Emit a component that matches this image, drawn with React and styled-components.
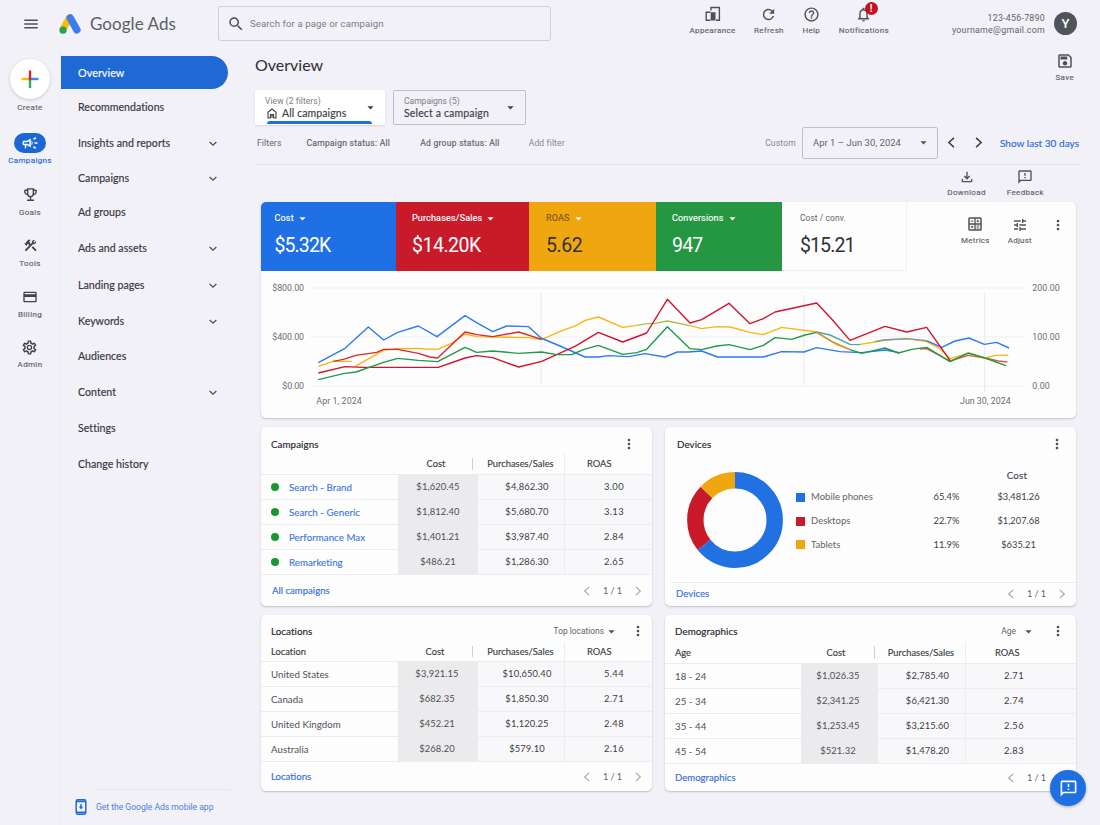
import React from "react";
import styled, { createGlobalStyle, css } from "styled-components";
import {
  MdMenu, MdSearch, MdRefresh, MdHelpOutline, MdNotificationsNone, MdOutlineSave,
  MdOutlineFileDownload, MdOutlineFeedback, MdOutlineCampaign, MdOutlineEmojiEvents,
  MdConstruction, MdCreditCard, MdOutlineSettings, MdMoreVert, MdArrowDropDown, MdTune,
} from "react-icons/md";

const GlobalStyle = createGlobalStyle`
  *, *::before, *::after { box-sizing: border-box; }
  body {
    margin: 0;
    background: #f2f1f7;
    color: #3c4043;
    font-family: Lato, "Open Sans", sans-serif;
    font-size: 10px;
    overflow: hidden;
  }
  svg { display: block; flex: none; }
`;

const BLUE = "#1f6fe5";
const RED = "#c81a29";
const AMBER = "#f0a60e";
const GREEN = "#259642";

const Page = styled.div`
  width: 1100px;
  height: 825px;
  display: flex;
  flex-direction: column;
`;

const Text = styled.span`
  font-family: ${(p) => (p.$roboto ? "Roboto" : "Lato")}, sans-serif;
  font-size: ${(p) => p.$size || 10}px;
  font-weight: ${(p) => p.$weight || 400};
  letter-spacing: ${(p) => p.$track || 0}px;
  line-height: ${(p) => p.$line || 12}px;
  color: ${(p) => p.$color || "#5f6368"};
  white-space: nowrap;
  ${(p) => p.$medium && css`-webkit-text-stroke: 0.15px currentColor;`}
`;

/* ---------- header ---------- */
const Header = styled.header`
  height: 47px;
  display: flex;
  align-items: center;
  padding: 0 23px 0 22px;
`;
const Brand = styled.div`
  display: flex;
  align-items: center;
  gap: 9px;
  margin-left: 19px;
  width: 159px;
`;
const Search = styled.div`
  width: 333px;
  height: 35px;
  border: 1px solid #cfd0d5;
  border-radius: 3px;
  display: flex;
  align-items: center;
  gap: 5px;
  padding-left: 8px;
`;
const HeaderTools = styled.div`
  display: flex;
  margin-left: auto;
  gap: 18.5px;
  align-self: flex-start;
  padding-top: 6px;
`;
const ToolButton = styled.div`
  position: relative;
  display: flex;
  flex-direction: column;
  align-items: center;
  gap: ${(p) => (p.$gap === undefined ? 1 : p.$gap)}px;
  color: #4d5156;
`;
const AlertBadge = styled.span`
  position: absolute;
  top: -4px;
  left: 26px;
  width: 13px;
  height: 13px;
  border-radius: 50%;
  background: #c5121f;
  color: #fff;
  font: 700 10px/13px Roboto, sans-serif;
  text-align: center;
`;
const Account = styled.div`
  display: flex;
  flex-direction: column;
  align-items: flex-end;
  width: 100px;
  margin-left: 56px;
`;
const Avatar = styled.div`
  width: 23px;
  height: 23px;
  margin-left: 9px;
  border-radius: 50%;
  background: #50555c;
  color: #fff;
  font: 500 13px/23px Roboto, sans-serif;
  text-align: center;
`;

/* ---------- left columns ---------- */
const Body = styled.div`
  flex: 1;
  min-height: 0;
  display: flex;
`;
const Rail = styled.aside`
  width: 61px;
  border-right: 1px solid #e9e9f0;
  padding-top: 12px;
  display: flex;
  flex-direction: column;
  align-items: center;
`;
const CreateButton = styled.div`
  width: 40px;
  height: 40px;
  border-radius: 50%;
  background: #fff;
  box-shadow: 0 1px 3px rgba(60, 64, 67, 0.24);
  display: grid;
  place-items: center;
`;
const RailItem = styled.div`
  display: flex;
  flex-direction: column;
  align-items: center;
  gap: ${(p) => p.$gap}px;
  margin-top: ${(p) => p.$top}px;
  color: #3f4247;
`;
const RailPill = styled.div`
  width: 32px;
  height: 20px;
  border-radius: 10px;
  background: #1c67d6;
  color: #fff;
  display: grid;
  place-items: center;
`;
const Nav = styled.nav`
  width: 170px;
  padding-top: 9px;
  display: flex;
  flex-direction: column;
`;
const NavItem = styled.div`
  height: 20px;
  margin-top: ${(p) => p.$top}px;
  padding: 0 14px 0 17px;
  display: flex;
  align-items: center;
  justify-content: space-between;
  color: #4d5156;
  ${(p) =>
    p.$active &&
    css`
      height: 33px;
      width: 167px;
      background: #1f69d4;
      border-radius: 0 17px 17px 0;
    `}
`;
const MobileApp = styled.div`
  margin: auto 0 0 14px;
  display: grid;
  grid-template-columns: 12px 1fr;
  column-gap: 9px;
  align-items: center;
  padding-bottom: 10px;
`;
const AppDivider = styled.div`
  grid-column: 2;
  height: 1px;
  margin-bottom: 9px;
  background: #e6e6ed;
`;

/* ---------- main ---------- */
const Main = styled.main`
  flex: 1;
  min-width: 0;
  padding: 5px 19px 0 24px;
  display: flex;
  flex-direction: column;
`;
const TitleRow = styled.div`
  display: flex;
  justify-content: space-between;
  height: 38px;
  padding-right: 7px;
`;
const Pickers = styled.div`
  display: flex;
  gap: 8px;
`;
const Picker = styled.div`
  width: ${(p) => p.$width}px;
  height: 35px;
  position: relative;
  display: flex;
  justify-content: space-between;
  align-items: center;
  padding: 0 7px 0 10px;
  border-radius: 2px;
  ${(p) =>
    p.$raised
      ? css`
          background: #fff;
          box-shadow: 0 1px 2px rgba(60, 64, 67, 0.16);
          &::after {
            content: "";
            position: absolute;
            left: 12px;
            right: 13px;
            bottom: 1px;
            height: 3px;
            border-radius: 3px 3px 0 0;
            background: #1a6fe8;
          }
        `
      : css`
          border: 1px solid #bfc0c5;
        `}
`;
const PickerText = styled.div`
  display: flex;
  flex-direction: column;
`;
const IconLine = styled.div`
  display: flex;
  align-items: center;
  gap: 5px;
  padding-left: 2px;
`;
const FilterRow = styled.div`
  height: 40px;
  display: flex;
  align-items: center;
  padding: 0 2px 4px 2px;
  border-bottom: 1px solid #e2e2e8;
`;
const Push = styled.div`
  margin-left: ${(p) => p.$by || "auto"};
  display: flex;
  align-items: center;
`;
const DateBox = styled.div`
  width: 136px;
  height: 32px;
  margin: 0 8px 0 6px;
  padding: 0 6px 0 10px;
  border: 1px solid #bfc0c5;
  border-radius: 2px;
  display: flex;
  align-items: center;
  justify-content: space-between;
  color: #4d5156;
`;
const Actions = styled.div`
  height: 37px;
  display: flex;
  justify-content: flex-end;
  gap: 21px;
  padding: 4px 37px 0 0;
`;
const Card = styled.section`
  background: #fdfdfe;
  border-radius: 5px;
  box-shadow: 0 1px 2px rgba(60, 64, 67, 0.28);
  display: flex;
  flex-direction: column;
  overflow: hidden;
`;
const ScoreCard = styled(Card)`
  width: 815px;
  height: 216px;
  margin-left: 6px;
`;
const Tiles = styled.div`
  display: flex;
  height: 69px;
`;
const Tile = styled.div`
  width: ${(p) => p.$width}px;
  background: ${(p) => p.$bg || "transparent"};
  color: #fff;
  padding: ${(p) => p.$pad};
  display: flex;
  flex-direction: column;
  gap: 9px;
  ${(p) =>
    !p.$bg &&
    css`
      border-right: 1px solid #f0f0f4;
      border-bottom: 1px solid #f0f0f4;
    `}
`;
const TileHead = styled.div`
  display: flex;
  align-items: center;
  gap: 1px;
  height: 12px;
`;
const TileTools = styled.div`
  flex: 1;
  display: flex;
  justify-content: flex-end;
  padding: 15px 10px 0 0;
  gap: 18px;
`;
const Grid = styled.div`
  display: grid;
  grid-template-columns: 391px 411px;
  grid-template-rows: 179px 176px;
  gap: 9px 13px;
  margin: 9px 0 0 6px;
`;
const CardHead = styled.div`
  display: flex;
  align-items: center;
  height: ${(p) => p.$height}px;
  padding: ${(p) => p.$pad};
`;
const HeadTools = styled.div`
  margin-left: auto;
  display: flex;
  align-items: center;
  color: #4d5156;
`;
const Row = styled.div`
  display: grid;
  grid-template-columns: ${(p) => p.$cols};
  height: ${(p) => p.$height}px;
`;
const Cell = styled.div`
  display: flex;
  align-items: center;
  justify-content: ${(p) => (p.$left ? "flex-start" : "center")};
  padding-left: ${(p) => p.$indent || 0}px;
  padding-right: ${(p) => p.$trail || 0}px;
  background: ${(p) => p.$bg || "transparent"};
  ${(p) => p.$line && css`border-top: 1px solid #ececf0;`}
  ${(p) => p.$split && css`border-left: 1px solid #ededf1;`}
`;
const HeadCell = styled(Cell)`
  position: relative;
  ${(p) =>
    p.$mark &&
    css`
      &::after {
        content: "";
        position: absolute;
        right: ${p.$mark}px;
        top: 4px;
        bottom: 4px;
        width: 1px;
        background: #cfcfd4;
      }
    `}
`;
const Dot = styled.i`
  width: 8px;
  height: 8px;
  border-radius: 50%;
  background: #1a9632;
  margin-right: 10px;
`;
const Foot = styled.div`
  flex: 1;
  display: flex;
  align-items: center;
  justify-content: space-between;
  border-top: 1px solid #ededf1;
  margin-left: ${(p) => p.$inset || 0}px;
  padding: ${(p) => p.$pad};
`;
const Pager = styled.div`
  display: flex;
  align-items: center;
  gap: 11px;
  color: #a3a5aa;
`;
const Devices = styled.div`
  display: flex;
  height: 123px;
  padding: 12px 0 0 21.5px;
`;
const Legend = styled.div`
  display: grid;
  grid-template-columns: 117.5px 66px 78px;
  grid-template-rows: 20px 24px 24px 23px;
  margin: -6px 0 0 13.5px;
  align-items: center;
  align-content: start;
`;
const LegendName = styled.div`
  display: flex;
  align-items: center;
  gap: 6px;
  grid-column: 1;
`;
const Swatch = styled.i`
  width: 9px;
  height: 9px;
  background: ${(p) => p.$color};
`;
const Centered = styled.div`
  text-align: center;
  line-height: 0;
  padding-right: ${(p) => p.$trail || 0}px;
  ${(p) => p.$col && css`grid-column: ${p.$col};`}
`;
const ChatButton = styled.div`
  position: fixed;
  right: 14px;
  bottom: 19px;
  width: 36px;
  height: 36px;
  border-radius: 50%;
  background: #1f6fe0;
  color: #fff;
  box-shadow: 0 1px 3px rgba(60, 64, 67, 0.4);
  display: grid;
  place-items: center;
`;

/* ---------- drawings ---------- */
const Logo = () => (
  <svg width="22" height="20" viewBox="0 0 22 20">
    <path d="M10.2 4.2 L4.4 14.6" stroke="#fbbc04" strokeWidth="7" strokeLinecap="round" />
    <path d="M11.2 4 L17.9 15.9" stroke="#3c7ded" strokeWidth="7.4" strokeLinecap="round" />
    <circle cx="4" cy="16.2" r="3.6" fill="#2ba24c" />
  </svg>
);
const Plus = () => (
  <svg width="18" height="18" viewBox="0 0 18 18" fill="none" strokeWidth="2.4">
    <path d="M.5 9H9" stroke="#fbbc04" />
    <path d="M9 9H17.5" stroke="#4285f4" />
    <path d="M9 8V18" stroke="#2fae57" />
    <path d="M9 .5V10.2" stroke="#d3233a" />
  </svg>
);
const Chevron = ({ dir, size = 10, weight = 1.3 }) => {
  const d = { left: "M7.2 .8 2.6 5 7.2 9.2", right: "M2.8 .8 7.4 5 2.8 9.2", down: "M.8 3.8 5 7.8 9.2 3.8" }[dir];
  return (
    <svg width={size} height={size} viewBox="0 0 10 10" fill="none" stroke="currentColor" strokeWidth={weight}>
      <path d={d} />
    </svg>
  );
};
const Appearance = () => (
  <svg width="16" height="16" viewBox="0 0 16 16" fill="none" stroke="#4d5156" strokeWidth="1.4">
    <path d="M5.4 14.2H1.2V6.2H5.4M6 4.4V1.5H14.4V14.2H11" />
    <path d="M6.4 6.9H9.8V13.8H6.4z" fill="#4d5156" />
  </svg>
);
const HomeIcon = () => (
  <svg width="10" height="11" viewBox="0 0 10 11" fill="none" stroke="#3c4043" strokeWidth="1.1">
    <path d="M1 4.2 5 1 9 4.2V10H6.6V6.6H3.4V10H1z" />
    <path d="M5 6.5V10" />
  </svg>
);
const MetricsIcon = () => (
  <svg width="14" height="14" viewBox="0 0 14 14" fill="none" stroke="#4d5156">
    <rect x="1" y="1" width="12" height="12" rx=".8" strokeWidth="1.5" />
    <path d="M7 1V13M1 7H13" strokeWidth="1.3" />
    <path d="M2.8 4.1H5.2M9.9 2.8V5.4M8.6 4.1H11.2M2.8 9.9H5.4M4.1 8.6V11.2M8.6 9H11.2M8.6 11H11.2" />
  </svg>
);
const Phone = () => (
  <svg width="12" height="16" viewBox="0 0 12 16" fill="none" stroke="#1f69d4" strokeWidth="1.5">
    <rect x="1.2" y=".8" width="9.6" height="14.4" rx="1.6" />
    <path d="M1.2 2.4H10.8M1.2 13.4H10.8" strokeWidth="1.8" />
    <path d="M6 5V8.6M4.6 7.6 6 9.3 7.4 7.6" strokeWidth="1.4" />
  </svg>
);
const Donut = () => {
  const r = 39.7;
  const c = 2 * Math.PI * r;
  let start = 0;
  return (
    <svg width="96" height="98" viewBox="0 0 96 98">
      <g transform="rotate(-90 48 49)" fill="none" strokeWidth="16.4">
        {[["#2271e3", 0.641], [RED, 0.23], [AMBER, 0.129]].map(([color, part]) => {
          const arc = (
            <circle key={color} cx="48" cy="49" r={r} stroke={color}
              strokeDasharray={`${part * c} ${c}`} strokeDashoffset={-start * c} />
          );
          start += part;
          return arc;
        })}
      </g>
    </svg>
  );
};

const LINES = [
  ["#e2574c", "2010,462 2030,461 2100,498 2155,481 2205,489 2245,498 2272,501"],
  ["#fab515", "205,514 250,499 305,499"],
  ["#fab515", "315,514 401,466 443,461 505,460 525,462 563,463 610,442 645,417 680,425 728,426 836,428 875,434 930,409 980,391 1005,376 1045,366 1118,397 1160,391"],
  ["#a3c14a", "1160,391 1190,386 1215,385 1252,378 1320,392"],
  ["#fab515", "1320,392 1355,401 1400,395 1440,396 1500,412 1540,419 1595,397 1700,411 1760,449 1800,464"],
  ["#fab515", "1830,448 1875,441 1900,436 1970,431 2030,440 2070,461 2100,491 2155,475 2205,489 2237,481 2275,481"],
  ["#2f79f2", "205,503 285,460 355,396 401,435 443,412 505,393 561,425 645,362 685,386 728,410 770,393 836,395 873,429 930,453 1005,486 1045,486 1075,482 1135,485 1185,476 1245,486 1282,471 1315,471 1355,468 1402,486 1540,486 1595,470 1662,471 1700,458 1770,470 1835,473 1905,465 1945,472"],
  ["#4ba6a0", "1700,411 1740,420 1800,448 1830,449"],
  ["#6e9e9a", "1875,440 1900,435 1970,431 2030,437"],
  ["#2f79f2", "2030,437 2075,457 2115,438 2157,429 2203,448 2240,442 2277,459"],
  ["#d1142e", "205,534 285,515 340,517 565,517 645,489 680,482 728,488 806,516 875,499 975,454 1045,412 1118,441 1190,414 1252,313 1320,384 1355,374 1437,325 1500,386 1540,371 1575,351 1700,324 1745,372 1800,436 1905,394 1970,411 2030,397 2100,496"],
  ["#d92a2a", "250,499 280,493 318,481 380,472 401,463 443,463 505,475 540,486 563,489 645,411 680,419 728,425 806,411 875,433"],
  ["#1f9a48", "205,554 280,536 318,531 401,502 443,490 505,496 563,500 645,457 680,472 728,468 806,475 875,471 920,479 965,479 1000,464 1045,451 1118,478 1160,473 1190,463 1252,395 1320,461 1355,464 1400,453 1437,449 1500,464 1540,451 1575,428 1625,433 1665,420 1700,412"],
  ["#cc8f35", "1700,412 1745,439 1800,464"],
  ["#1f9a48", "1800,464 1835,475 1905,459 1945,474 1985,463 2030,457 2100,500 2155,474 2205,489 2268,512"],
];

// Plot units are thirds of a CSS pixel.
const Chart = () => (
  <svg width="815" height="147" viewBox="33 228 2445 441" fontFamily="Roboto, sans-serif" fontSize="26.5" fill="#6a6d72">
    <g stroke="#f0f0f4" strokeWidth="3.4" fill="none">
      <path d="M180 279H2322M180 426H2322M180 573H2322" />
      <path d="M873 293V566M1662 300V570M2204 293V592" stroke="#ebebf1" />
    </g>
    <g fill="none" strokeWidth="4.2" strokeLinejoin="round">
      {LINES.map(([color, points], i) => (
        <polyline key={i} stroke={color} points={points} />
      ))}
    </g>
    <text x="67" y="288" textLength="95">$800.00</text>
    <text x="67" y="435" textLength="95">$400.00</text>
    <text x="97" y="581" textLength="65">$0.00</text>
    <text x="2347" y="288" textLength="82">200.00</text>
    <text x="2347" y="435" textLength="82">100.00</text>
    <text x="2347" y="581" textLength="52">0.00</text>
    <text x="199" y="628" textLength="136">Apr 1, 2024</text>
    <text x="2130" y="628" textLength="152">Jun 30, 2024</text>
  </svg>
);

/* ---------- data ---------- */
const NAV = [
  ["Recommendations", 8], ["Insights and reports", 16, 1], ["Campaigns", 15, 1], ["Ad groups", 14],
  ["Ads and assets", 16, 1], ["Landing pages", 17, 1], ["Keywords", 16, 1], ["Audiences", 15],
  ["Content", 16, 1], ["Settings", 16], ["Change history", 16],
];
const CAMPAIGNS = [
  ["Search - Brand", "$1,620.45", "$4,862.30", "3.00"],
  ["Search - Generic", "$1,812.40", "$5,680.70", "3.13"],
  ["Performance Max", "$1,401.21", "$3,987.40", "2.84"],
  ["Remarketing", "$486.21", "$1,286.30", "2.65"],
];
const LOCATIONS = [
  ["United States", "$3,921.15", "$10,650.40", "5.44"],
  ["Canada", "$682.35", "$1,850.30", "2.71"],
  ["United Kingdom", "$452.21", "$1,120.25", "2.48"],
  ["Australia", "$268.20", "$579.10", "2.16"],
];
const AGES = [
  ["18 - 24", "$1,026.35", "$2,785.40", "2.71"],
  ["25 - 34", "$2,341.25", "$6,421.30", "2.74"],
  ["35 - 44", "$1,253.45", "$3,215.60", "2.56"],
  ["45 - 54", "$521.32", "$1,478.20", "2.83"],
];
const DEVICES = [
  ["Mobile phones", "65.4%", "$3,481.26", "#2271e3"],
  ["Desktops", "22.7%", "$1,207.68", RED],
  ["Tablets", "11.9%", "$635.21", AMBER],
];

const Tool = ({ icon, label, gap, track = 0.35, children }) => (
  <ToolButton $gap={gap}>
    {icon}
    <Text $roboto $medium $size={8} $track={track} $line={11} $color="#63666b">{label}</Text>
    {children}
  </ToolButton>
);
const RailEntry = ({ icon, label, top, gap = 4, color = "#63666b" }) => (
  <RailItem $top={top} $gap={gap}>
    {icon}
    <Text $roboto $medium $size={8} $track={0.35} $line={10} $color={color}>{label}</Text>
  </RailItem>
);
const Metric = ({ label, value, width, bg, pad, ink = "#fff", muted = "#fff", menu = true, track = -0.6 }) => (
  <Tile $width={width} $bg={bg} $pad={pad}>
    <TileHead>
      <Text $roboto $size={menu ? 9 : 8.4} $medium={menu} $track={menu ? 0.17 : 0.1} $color={muted}>{label}</Text>
      {menu && <MdArrowDropDown size={15} color="#fff" />}
    </TileHead>
    <Text $roboto $size={19.5} $line={26} $track={track} $color={ink}>{value}</Text>
  </Tile>
);
const HeadText = ({ children }) => (
  <Text $size={9.3} $medium $track={0.02} $color="#3c4043">{children}</Text>
);
const Title = ({ children }) => (
  <Text $size={9.8} $medium $track={0.05} $color="#25282c">{children}</Text>
);
const Table = ({ first, rows, cols, headHeight, rowHeight, indent, dots, mark, costTrail, roasHead, roasIndent }) => (
  <>
    <Row $cols={cols} $height={headHeight}>
      <HeadCell $left $indent={indent}><HeadText>{first}</HeadText></HeadCell>
      <HeadCell $mark={mark} $trail={4 + costTrail}><HeadText>Cost</HeadText></HeadCell>
      <HeadCell $trail={1}><HeadText>Purchases/Sales</HeadText></HeadCell>
      <HeadCell $left $indent={roasHead} $split><HeadText>ROAS</HeadText></HeadCell>
    </Row>
    {rows.map(([name, cost, sales, roas]) => (
      <Row key={name} $cols={cols} $height={rowHeight}>
        <Cell $left $indent={indent} $line>
          {dots && <Dot />}
          <Text $size={9.7} $track={0.05} $medium={dots} $color={dots ? "#4378db" : "#4d5156"}>{name}</Text>
        </Cell>
        <Cell $bg="#ebebed" $trail={costTrail}><Text $size={9.4} $track={0.1} $color="#4d5156">{cost}</Text></Cell>
        <Cell $bg="#f8f8fb" $line $indent={12}><Text $size={9.4} $track={0.1} $color="#3c4043">{sales}</Text></Cell>
        <Cell $bg="#f8f8fb" $line $split $left $indent={roasIndent}><Text $size={9.4} $track={0.35} $color="#3c4043">{roas}</Text></Cell>
      </Row>
    ))}
  </>
);
const Footer = ({ label, pad, inset }) => (
  <Foot $pad={pad} $inset={inset}>
    <Text $size={9.6} $medium $color="#3570d8">{label}</Text>
    <Pager>
      <Chevron dir="left" weight={1.1} />
      <Text $size={9.2} $track={-0.1}>1 / 1</Text>
      <Chevron dir="right" weight={1.1} />
    </Pager>
  </Foot>
);

export default function App() {
  const leftCols = "137px 80px 86px 88px";
  const rightCols = "136px 77px 87px 111px";
  return (
    <Page>
      <GlobalStyle />
      <Header>
        <MdMenu size={18} color="#4d5156" />
        <Brand>
          <Logo />
          <Text $size={17} $line={22} $track={0.05} $color="#5b5e64">Google Ads</Text>
        </Brand>
        <Search>
          <MdSearch size={18} color="#4d5156" />
          <Text $roboto $size={9.6} $track={0.1} $color="#7a7d83">Search for a page or campaign</Text>
        </Search>
        <HeaderTools>
          <Tool icon={<Appearance />} label="Appearance" gap={3} />
          <Tool icon={<MdRefresh size={17} />} label="Refresh" gap={2} />
          <Tool icon={<MdHelpOutline size={17} />} label="Help" gap={2} />
          <Tool icon={<MdNotificationsNone size={17} />} label="Notifications" gap={2}>
            <AlertBadge>!</AlertBadge>
          </Tool>
        </HeaderTools>
        <Account>
          <Text $roboto $size={8.8} $track={0.27}>123-456-7890</Text>
          <Text $roboto $size={8.8} $track={0.27}>yourname@gmail.com</Text>
        </Account>
        <Avatar>Y</Avatar>
      </Header>

      <Body>
        <Rail>
          <CreateButton><Plus /></CreateButton>
          <RailEntry icon={null} label="Create" top={4} />
          <RailEntry icon={<RailPill><MdOutlineCampaign size={18} /></RailPill>} label="Campaigns" top={20} gap={3} color="#2b6cd6" />
          <RailEntry icon={<MdOutlineEmojiEvents size={17} />} label="Goals" top={20} gap={5} />
          <RailEntry icon={<MdConstruction size={15} />} label="Tools" top={20} gap={6} />
          <RailEntry icon={<MdCreditCard size={16} />} label="Billing" top={20} gap={5} />
          <RailEntry icon={<MdOutlineSettings size={17} />} label="Admin" top={19} gap={4} />
        </Rail>
        <Nav>
          <NavItem $active $top={0}>
            <Text $size={10.8} $medium $track={0.05} $color="#fff">Overview</Text>
          </NavItem>
          {NAV.map(([label, top, more]) => (
            <NavItem key={label} $top={top}>
              <Text $size={10.6} $medium $track={0.03} $color="#34373c">{label}</Text>
              {more && <Chevron dir="down" size={8} weight={1.6} />}
            </NavItem>
          ))}
          <MobileApp>
            <AppDivider />
            <Phone />
            <Text $roboto $size={8.6} $track={-0.03} $color="#4c80da">Get the Google Ads mobile app</Text>
          </MobileApp>
        </Nav>

        <Main>
          <TitleRow>
            <Text $size={16} $line={26} $color="#2b2d31">Overview</Text>
            <Tool icon={<MdOutlineSave size={18} />} label="Save" gap={2} />
          </TitleRow>
          <Pickers>
            <Picker $width={130} $raised>
              <PickerText>
                <Text $roboto $size={8.5} $line={12} $track={0.05} $color="#7a7d83">View (2 filters)</Text>
                <IconLine>
                  <HomeIcon />
                  <Text $size={10.5} $line={13} $medium $track={0.1} $color="#3c4043">All campaigns</Text>
                </IconLine>
              </PickerText>
              <MdArrowDropDown size={15} color="#3c4043" />
            </Picker>
            <Picker $width={133}>
              <PickerText>
                <Text $roboto $size={8.5} $line={12} $color="#7a7d83">Campaigns (5)</Text>
                <Text $size={10.5} $line={13} $medium $track={0.15} $color="#3c4043">Select a campaign</Text>
              </PickerText>
              <MdArrowDropDown size={15} color="#3c4043" />
            </Picker>
          </Pickers>
          <FilterRow>
            <Text $roboto $size={8.5} $track={0.15}>Filters</Text>
            <Push $by="25px"><Text $roboto $size={8.5} $medium $track={0.28}>Campaign status: All</Text></Push>
            <Push $by="30px"><Text $roboto $size={8.5} $medium $track={0.28}>Ad group status: All</Text></Push>
            <Push $by="29px"><Text $roboto $size={8.5} $track={0.15} $color="#84878c">Add filter</Text></Push>
            <Push>
              <Text $roboto $size={8.5} $track={0.2} $color="#84878c">Custom</Text>
              <DateBox>
                <Text $roboto $size={9.4} $track={0.07}>Apr 1 – Jun 30, 2024</Text>
                <MdArrowDropDown size={15} />
              </DateBox>
              <Chevron dir="left" size={11} weight={1.4} />
              <Push $by="16px"><Chevron dir="right" size={11} weight={1.4} /></Push>
              <Push $by="16px"><Text $size={10} $medium $track={0.03} $color="#2b6cd6">Show last 30 days</Text></Push>
            </Push>
          </FilterRow>
          <Actions>
            <Tool icon={<MdOutlineFileDownload size={16} />} label="Download" gap={2} />
            <Tool icon={<MdOutlineFeedback size={16} />} label="Feedback" gap={2} />
          </Actions>

          <ScoreCard>
            <Tiles>
              <Metric label="Cost" value="$5.32K" width={135} bg={BLUE} pad="10px 0 0 13.5px" track={-0.9} />
              <Metric label="Purchases/Sales" value="$14.20K" width={133} bg={RED} pad="10px 0 0 16px" track={-0.5} />
              <Metric label="ROAS" value="5.62" width={127} bg={AMBER} pad="10px 0 0 17px" ink="#2e3238" muted="#7a5a1e" track={-0.4} />
              <Metric label="Conversions" value="947" width={126} bg={GREEN} pad="10px 0 0 16px" track={-0.8} />
              <Metric label="Cost / conv." value="$15.21" width={125} pad="10px 0 0 18px" ink="#2e3238" muted="#5f6368" menu={false} track={-0.9} />
              <TileTools>
                <Tool icon={<MetricsIcon />} label="Metrics" gap={4} track={0.25} />
                <Tool icon={<MdTune size={16} />} label="Adjust" gap={2} track={0.25} />
                <MdMoreVert size={16} color="#4d5156" />
              </TileTools>
            </Tiles>
            <Chart />
          </ScoreCard>

          <Grid>
            <Card>
              <CardHead $height={27} $pad="6px 15px 0 10px">
                <Title>Campaigns</Title>
                <HeadTools><MdMoreVert size={16} /></HeadTools>
              </CardHead>
              <Table first="" rows={CAMPAIGNS} cols={leftCols} headHeight={20} rowHeight={25} indent={10} dots mark={5} costTrail={0} roasHead={22} roasIndent={39} />
              <Footer label="All campaigns" pad="0 9px 0 11px" />
            </Card>
            <Card>
              <CardHead $height={32} $pad="2px 11px 0 12px">
                <Title>Devices</Title>
                <HeadTools><MdMoreVert size={16} /></HeadTools>
              </CardHead>
              <Devices>
                <Donut />
                <Legend>
                  <Centered $col={3} $trail={3}><Text $size={9.8} $medium $track={0.2} $color="#45484d">Cost</Text></Centered>
                  {DEVICES.map(([name, share, cost, color]) => (
                    <React.Fragment key={name}>
                      <LegendName>
                        <Swatch $color={color} />
                        <Text $size={9.5} $track={0}>{name}</Text>
                      </LegendName>
                      <Centered><Text $size={9.3} $track={0.05} $color="#3c4043">{share}</Text></Centered>
                      <Centered><Text $size={9.3} $track={0.02} $color="#3c4043">{cost}</Text></Centered>
                    </React.Fragment>
                  ))}
                </Legend>
              </Devices>
              <Footer label="Devices" pad="0 9px 2px 5px" inset={6} />
            </Card>
            <Card>
              <CardHead $height={27} $pad="5px 6px 0 10px">
                <Title>Locations</Title>
                <HeadTools>
                  <Text $roboto $size={8.4}>Top locations</Text>
                  <MdArrowDropDown size={15} />
                  <Push $by="11px"><MdMoreVert size={16} /></Push>
                </HeadTools>
              </CardHead>
              <Table first="Location" rows={LOCATIONS} cols={leftCols} headHeight={19} rowHeight={25} indent={10} mark={5} costTrail={2} roasHead={22} roasIndent={39} />
              <Footer label="Locations" pad="0 9px 0 10px" />
            </Card>
            <Card>
              <CardHead $height={27} $pad="5px 10px 0 10px">
                <Title>Demographics</Title>
                <HeadTools>
                  <Text $roboto $size={8.5}>Age</Text>
                  <Push $by="5px"><MdArrowDropDown size={15} /></Push>
                  <Push $by="14px"><MdMoreVert size={16} /></Push>
                </HeadTools>
              </CardHead>
              <Table first="Age" rows={AGES} cols={rightCols} headHeight={21} rowHeight={25} indent={10} mark={3} costTrail={3} roasHead={29} roasIndent={38} />
              <Footer label="Demographics" pad="0 9px 0 10px" />
            </Card>
          </Grid>
        </Main>
      </Body>
      <ChatButton><MdOutlineFeedback size={19} /></ChatButton>
    </Page>
  );
}
